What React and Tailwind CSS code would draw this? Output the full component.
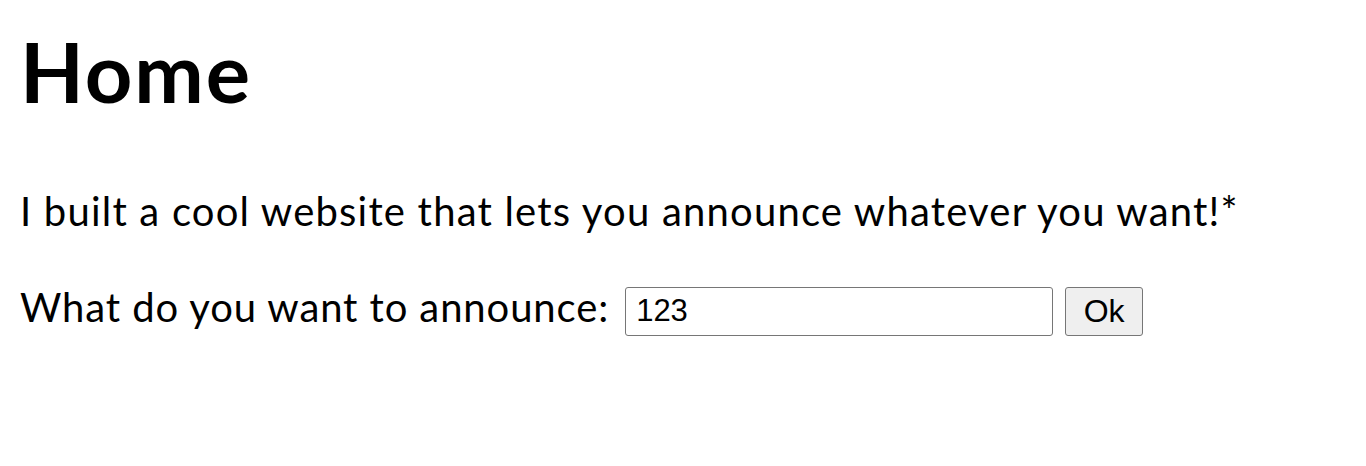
import React, { useState } from "react";

export default function App() {
  const [value, setValue] = useState("123");

  return (
    <div className="px-5 pt-[22px] font-['Lato','Noto_Sans',sans-serif] text-black bg-white min-h-[466px]">
      <h1 className="text-[83px] font-bold leading-[1.2] tracking-[2px]">Home</h1>
      <p className="mt-[65px] text-[40px] leading-[1.2] tracking-[1.2px]">
        I built a cool website that lets you announce whatever you want!*
      </p>
      <div className="mt-[48px] flex items-start text-[40px] leading-[1.2] tracking-[0.9px]">
        <span>What do you want to announce:</span>
        <input
          value={value}
          onChange={(e) => setValue(e.target.value)}
          className="mt-[4px] ml-[16px] w-[428px] h-[49px] px-[10px] border border-[#767676] rounded-[3px] font-['Liberation_Sans',Arial,sans-serif] text-[31px] tracking-normal text-black"
        />
        <button className="mt-[4px] ml-[12px] w-[78px] h-[49px] border border-[#767676] rounded-[3px] bg-[#efefef] font-['Liberation_Sans',Arial,sans-serif] text-[32px] tracking-normal text-black">
          Ok
        </button>
      </div>
    </div>
  );
}
